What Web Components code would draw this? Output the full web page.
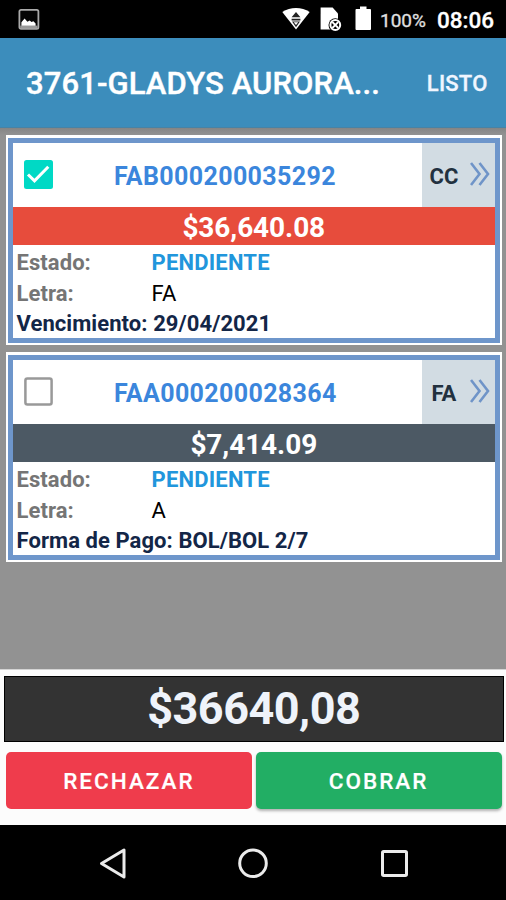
<!DOCTYPE html>
<html lang="es">
<head>
<meta charset="utf-8">
<title>Cobranza</title>
<style>
  html, body { margin: 0; height: 100%; }
  body { font-family: Roboto, "Liberation Sans", sans-serif; background: #000; overflow: hidden; }
</style>
</head>
<body>
<cobro-app></cobro-app>
<script>
class StatusBar extends HTMLElement {
  constructor() {
    super();
    this.attachShadow({ mode: 'open' });
  }
  connectedCallback() {
    this.shadowRoot.innerHTML = `
      <style>
        :host { display:flex; align-items:center; height:38px; box-sizing:border-box; padding:0 12px 0 18px; background:#000; color:#fff; }
        svg { display:block; flex:none; }
        .space { flex:1; }
        .sim { margin-left:10px; }
        .battery { margin-left:13px; }
        .level { margin:2px 0 0 8.5px; width:46px; white-space:nowrap; font-size:19px; color:#e0e0e0; -webkit-text-stroke:.3px #e0e0e0; }
        .time { margin:1px 0 0 11px; width:57px; white-space:nowrap; font-size:22.5px; font-weight:500; -webkit-text-stroke:.3px #fff; }
      </style>
      <svg width="22" height="22" viewBox="0 0 22 22">
        <rect x="1.4" y="1.9" width="19" height="19" rx="1.6" fill="#050505" stroke="#aaa" stroke-width="1.8"/>
        <path d="M2.2 17.6h17.4v2.8H2.2z" fill="#999"/>
        <path d="M3.4 17.8v-3.6l3.2-3.6 2.8 3.2 2.3-1.4 1.8 1.6 1.9-.7 2.2 2.2v2.3z" fill="#fff"/>
      </svg>
      <span class="space"></span>
      <svg width="28" height="24" viewBox="0 0 28 24">
        <path d="M.3 5C8.3-.2 19.7-.2 27.7 5L14 22.5z" fill="#fff"/>
        <path d="M14 5l4.4 5.300H9.600zM9.600 11.800h8.800v1.700H9.600zM10 14.500h8l-4 5.700z" fill="#222"/>
        <path d="M11.800 15.300h4.400L14 18z" fill="#fff"/>
      </svg>
      <svg class="sim" width="22" height="26" viewBox="0 0 22 26">
        <path d="M.6 1.500h12l5.400 6v16H.6z" fill="#fff"/>
        <circle cx="15.300" cy="19" r="6.800" fill="#000"/>
        <circle cx="15.300" cy="19" r="4.900" fill="none" stroke="#fff" stroke-width="2"/>
        <path d="M12.300 16l6 6M18.300 16l-6 6" stroke="#fff" stroke-width="1.800"/>
      </svg>
      <svg class="battery" width="17" height="26" viewBox="0 0 17 26">
        <path d="M5 .5h6.500V3h3.600q.9 0 .9 .9V23q0 .9-.9 .9H1.400q-.9 0-.9-.9V3.900q0-.9.9-.9H5z" fill="#fff"/>
      </svg>
      <span class="level">${this.getAttribute('level')}</span>
      <span class="time">${this.getAttribute('time')}</span>
    `;
  }
}
customElements.define('status-bar', StatusBar);

class TitleBar extends HTMLElement {
  constructor() {
    super();
    this.attachShadow({ mode: 'open' });
  }
  connectedCallback() {
    this.shadowRoot.innerHTML = `
      <style>
        :host { display:flex; align-items:center; justify-content:space-between; height:90px; box-sizing:border-box;
          padding:2px 18.5px 0 26px; background:#3c8dbc; border-bottom:1px solid #4783a6; color:#fff; white-space:nowrap; }
        .title { font-size:31px; font-weight:500; letter-spacing:.1px; -webkit-text-stroke:.4px #fff; }
        .action { font-size:22px; font-weight:500; letter-spacing:.2px; color:#f0f6ff; -webkit-text-stroke:.3px #f0f6ff; }
      </style>
      <span class="title"><slot></slot></span>
      <span class="action"><slot name="action"></slot></span>
    `;
  }
}
customElements.define('title-bar', TitleBar);

class CheckMark extends HTMLElement {
  constructor() {
    super();
    this.attachShadow({ mode: 'open' });
  }
  connectedCallback() {
    const on = this.hasAttribute('checked');
    this.shadowRoot.innerHTML = `
      <style>
        :host { display:block; width:29px; height:29px; }
        svg { display:block; }
      </style>
      <svg width="29" height="29" viewBox="0 0 29 29">
        ${on
          ? '<rect width="29" height="29" rx="2.5" fill="#00d9c5"/><path d="M4 14.5l6.5 6.3L24.3 6.8" fill="none" stroke="#fff" stroke-width="3"/>'
          : '<rect x="1.4" y="1.4" width="26.2" height="26.2" rx="2" fill="#fff" stroke="#999" stroke-width="2.5"/>'}
      </svg>
    `;
  }
}
customElements.define('check-mark', CheckMark);

class InvoiceCard extends HTMLElement {
  constructor() {
    super();
    this.attachShadow({ mode: 'open' });
  }
  connectedCallback() {
    const checked = this.hasAttribute('checked');
    this.shadowRoot.innerHTML = `
      <style>
        :host { display:block; box-sizing:border-box; height:210px; padding:2.5px 2px; background:#fff; }
        .frame { height:100%; box-sizing:border-box; border:5px solid #6e96cb; background:#fff; }
        .head { display:flex; align-items:center; height:64px; }
        .head check-mark { margin:-1px 0 0 11px; }
        .number { flex:1; padding:4px 0 0 61px; font-size:25px; font-weight:700; letter-spacing:.37px; color:#3b86dc; white-space:nowrap; }
        .type { display:flex; align-items:center; justify-content:space-between; align-self:stretch; width:73px;
          box-sizing:border-box; padding:3px 4.5px 0 ${this.getAttribute('type') === 'CC' ? 8 : 10}px; background:#d2dce3; color:#22313f; font-size:22px; font-weight:700; }
        .type svg { margin-top:-5px; }
        .amount { height:38.5px; line-height:42px; text-align:center; font-size:28px; font-weight:700; letter-spacing:-.08px; color:#fff;
          background:${checked ? '#e74c3c' : '#4c5964'}; }
        .rows { padding:3px 4px 0 3.5px; font-size:22px; line-height:30.6px; white-space:nowrap; letter-spacing:.07px; }
        .row { display:grid; grid-template-columns:135px 1fr; color:#000; }
        .key { font-weight:700; color:#757575; }
        .state { font-weight:700; color:#2196dc; letter-spacing:.2px; }
        .extra { font-weight:700; color:#132647; }
      </style>
      <div class="frame">
        <div class="head">
          <check-mark ${checked ? 'checked' : ''}></check-mark>
          <span class="number"><slot name="number"></slot></span>
          <span class="type">
            <svg width="20" height="24" viewBox="0 0 20 24"><path d="M1 1l8.5 11L1 23M9.5 1L18 12 9.5 23" fill="none" stroke="#6f94c8" stroke-width="2.6"/></svg>
          </span>
        </div>
        <div class="amount"><slot name="amount"></slot></div>
        <div class="rows">
          <div class="row"><span class="key">Estado:</span><span class="state"><slot name="state"></slot></span></div>
          <div class="row"><span class="key">Letra:</span><span><slot name="letter"></slot></span></div>
          <div class="extra"><slot></slot></div>
        </div>
      </div>
    `;
    this.shadowRoot.querySelector('.type').prepend(this.getAttribute('type'));
  }
}
customElements.define('invoice-card', InvoiceCard);

class ActionButton extends HTMLElement {
  constructor() {
    super();
    this.attachShadow({ mode: 'open' });
  }
  connectedCallback() {
    this.shadowRoot.innerHTML = `
      <style>
        :host { display:block; flex:1; }
        button { display:block; width:100%; height:57px; border:0; padding:1px 0 0; border-radius:5px; background:var(--fill);
          box-shadow:var(--lift, none); color:#fff; font:500 22.5px Roboto, "Liberation Sans", sans-serif; letter-spacing:2px;
          -webkit-text-stroke:.2px #fff; }
      </style>
      <button><slot></slot></button>
    `;
  }
}
customElements.define('action-button', ActionButton);

class TotalPanel extends HTMLElement {
  constructor() {
    super();
    this.attachShadow({ mode: 'open' });
  }
  connectedCallback() {
    this.shadowRoot.innerHTML = `
      <style>
        :host { display:block; box-sizing:border-box; height:156px; padding:6px 2.5px 0 4px; background:#fcfcfc; border-top:1px solid #d4d4d4; }
        .total { height:66px; box-sizing:border-box; border:1.5px solid #000; background:#333; color:#eff3fa;
          text-align:center; font-size:45px; letter-spacing:-.5px; line-height:63px; font-weight:700; }
        .buttons { display:flex; gap:4px; padding:10px 2px 0; }
      </style>
      <div class="total"><slot></slot></div>
      <div class="buttons"><slot name="buttons"></slot></div>
    `;
  }
}
customElements.define('total-panel', TotalPanel);

class NavBar extends HTMLElement {
  constructor() {
    super();
    this.attachShadow({ mode: 'open' });
  }
  connectedCallback() {
    this.shadowRoot.innerHTML = `
      <style>
        :host { display:grid; grid-template-columns:repeat(3, 141px); justify-content:center; place-items:center; height:75px; background:#000; }
        svg { display:block; fill:none; stroke:#ebebeb; stroke-width:3; }
      </style>
      <svg width="30" height="32" viewBox="0 0 30 32"><path d="M27 3v27L4.5 16.5z" stroke-linejoin="round"/></svg>
      <svg width="32" height="32" viewBox="0 0 32 32"><circle cx="16" cy="16.3" r="13.3"/></svg>
      <svg width="30" height="30" viewBox="0 0 30 30"><rect x="3.5" y="3.5" width="24" height="24" rx="1.2"/></svg>
    `;
  }
}
customElements.define('nav-bar', NavBar);

class CobroApp extends HTMLElement {
  constructor() {
    super();
    this.attachShadow({ mode: 'open' });
  }
  connectedCallback() {
    this.shadowRoot.innerHTML = `
      <style>
        :host { display:flex; flex-direction:column; height:900px; width:506px; overflow:hidden; }
        .list { flex:1; display:flex; flex-direction:column; gap:7px; padding:7px 4.5px 0 6px; background:linear-gradient(#858585, #929292 7px); }
        .reject { --fill:#ef3c4c; }
        .collect { --fill:#22ae64; --lift:0 2px 3px rgba(0,0,0,.3); }
      </style>
      <status-bar level="100%" time="08:06"></status-bar>
      <title-bar>3761-GLADYS AURORA...<span slot="action">LISTO</span></title-bar>
      <div class="list">
        <invoice-card checked type="CC">
          <span slot="number">FAB000200035292</span>
          <span slot="amount">$36,640.08</span>
          <span slot="state">PENDIENTE</span>
          <span slot="letter">FA</span>
          Vencimiento: 29/04/2021
        </invoice-card>
        <invoice-card type="FA">
          <span slot="number">FAA000200028364</span>
          <span slot="amount">$7,414.09</span>
          <span slot="state">PENDIENTE</span>
          <span slot="letter">A</span>
          Forma de Pago: BOL/BOL 2/7
        </invoice-card>
      </div>
      <total-panel>
        $36640,08
        <action-button class="reject" slot="buttons">RECHAZAR</action-button>
        <action-button class="collect" slot="buttons">COBRAR</action-button>
      </total-panel>
      <nav-bar></nav-bar>
    `;
  }
}
customElements.define('cobro-app', CobroApp);
</script>
</body>
</html>
